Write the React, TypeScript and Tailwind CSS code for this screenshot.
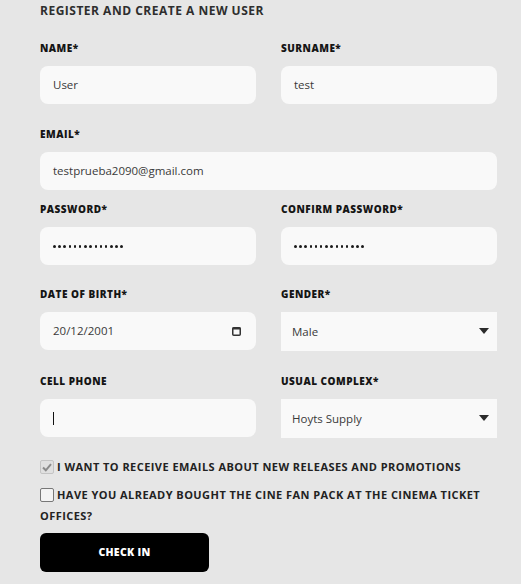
import React from "react";

const font = { fontFamily: '"Open Sans", "Liberation Sans", sans-serif' };

function Label({ children }: { children: React.ReactNode }) {
  return (
    <div className="h-[14px] text-[10px] leading-[14px] font-extrabold text-[#151515] tracking-[0.5px]">
      {children}
    </div>
  );
}

function TextBox({ children }: { children?: React.ReactNode }) {
  return (
    <div className="mt-[11px] flex h-[38px] items-center rounded-[8px] bg-[#f9f9f9] px-[13px] text-[11.5px] text-[#3a3a3a]">
      {children}
    </div>
  );
}

function SelectBox({ value }: { value: string }) {
  return (
    <div className="mt-[11px] flex h-[39px] items-center justify-between bg-[#f9f9f9] pl-[11px] pr-[8px] text-[11.5px] text-[#3a3a3a]">
      <span>{value}</span>
      <svg width="10" height="6" viewBox="0 0 10 6" className="mb-[2px]">
        <path d="M0 0 H10 L5 6 Z" fill="#2b2b2b" />
      </svg>
    </div>
  );
}

function Dots() {
  return (
    <div className="flex gap-[2.7px] pt-[1px]">
      {Array.from({ length: 14 }).map((_, i) => (
        <span key={i} className="block h-[2.5px] w-[2.5px] rounded-full bg-[#1a1a1a]" />
      ))}
    </div>
  );
}

export default function App() {
  return (
    <div className="min-h-[584px] w-[521px] bg-[#e6e6e6] pl-[40px] pr-[24px] pt-[3px]" style={font}>
      <div className="h-[16px] text-[12px] leading-[16px] font-bold tracking-[0.5px] text-[#2e2e2e]">
        REGISTER AND CREATE A NEW USER
      </div>

      <div className="mt-[22px] grid grid-cols-2 gap-x-[25px]">
        <div>
          <Label>NAME*</Label>
          <TextBox>User</TextBox>
        </div>
        <div>
          <Label>SURNAME*</Label>
          <TextBox>test</TextBox>
        </div>
      </div>

      <div className="mt-[23px]">
        <Label>EMAIL*</Label>
        <TextBox>testprueba2090@gmail.com</TextBox>
      </div>

      <div className="mt-[12px] grid grid-cols-2 gap-x-[25px]">
        <div>
          <Label>PASSWORD*</Label>
          <TextBox>
            <Dots />
          </TextBox>
        </div>
        <div>
          <Label>CONFIRM PASSWORD*</Label>
          <TextBox>
            <Dots />
          </TextBox>
        </div>
      </div>

      <div className="mt-[22px] grid grid-cols-2 gap-x-[25px]">
        <div>
          <Label>DATE OF BIRTH*</Label>
          <div className="mt-[11px] flex h-[38px] items-center justify-between rounded-[8px] bg-[#f9f9f9] pl-[13px] pr-[15px] text-[11.5px] text-[#3a3a3a]">
            <span>20/12/2001</span>
            <svg width="9" height="10" viewBox="0 0 9 10">
              <rect x="0.75" y="1.75" width="7.5" height="7.5" rx="1" fill="none" stroke="#333" strokeWidth="1.5" />
              <rect x="0.5" y="1.5" width="8" height="2" fill="#333" />
            </svg>
          </div>
        </div>
        <div>
          <Label>GENDER*</Label>
          <SelectBox value="Male" />
        </div>
      </div>

      <div className="mt-[23px] grid grid-cols-2 gap-x-[25px]">
        <div>
          <Label>CELL PHONE</Label>
          <TextBox>
            <span className="block h-[13px] w-[1px] bg-[#111]" />
          </TextBox>
        </div>
        <div>
          <Label>USUAL COMPLEX*</Label>
          <SelectBox value="Hoyts Supply" />
        </div>
      </div>

      <div className="mt-[22px] flex items-center text-[11px] font-bold tracking-[0.45px] text-[#222]">
        <span className="flex h-[14px] w-[14px] shrink-0 items-center justify-center rounded-[2px] border border-[#c4c4c4] bg-[#e0e0e0]">
          <svg width="10" height="9" viewBox="0 0 10 9">
            <path d="M1 4.5 L3.8 7.3 L9 1.2" fill="none" stroke="#8a8a8a" strokeWidth="2" />
          </svg>
        </span>
        <span className="ml-[3px] whitespace-nowrap leading-[14px]">I WANT TO RECEIVE EMAILS ABOUT NEW RELEASES AND PROMOTIONS</span>
      </div>

      <p className="mt-[10px] text-[11px] leading-[21px] font-bold tracking-[0.45px] text-[#222]">
        <span className="mr-[3px] inline-block h-[14px] w-[14px] rounded-[2px] border border-[#777] bg-[#f3f3f3] align-[-3px]" />
        HAVE YOU ALREADY BOUGHT THE CINE FAN PACK AT THE CINEMA TICKET OFFICES?
      </p>

      <button className="mt-[7px] flex h-[39px] w-[169px] items-center justify-center rounded-[6px] bg-black text-[10.5px] font-extrabold tracking-[0.3px] text-white">
        CHECK IN
      </button>
    </div>
  );
}
